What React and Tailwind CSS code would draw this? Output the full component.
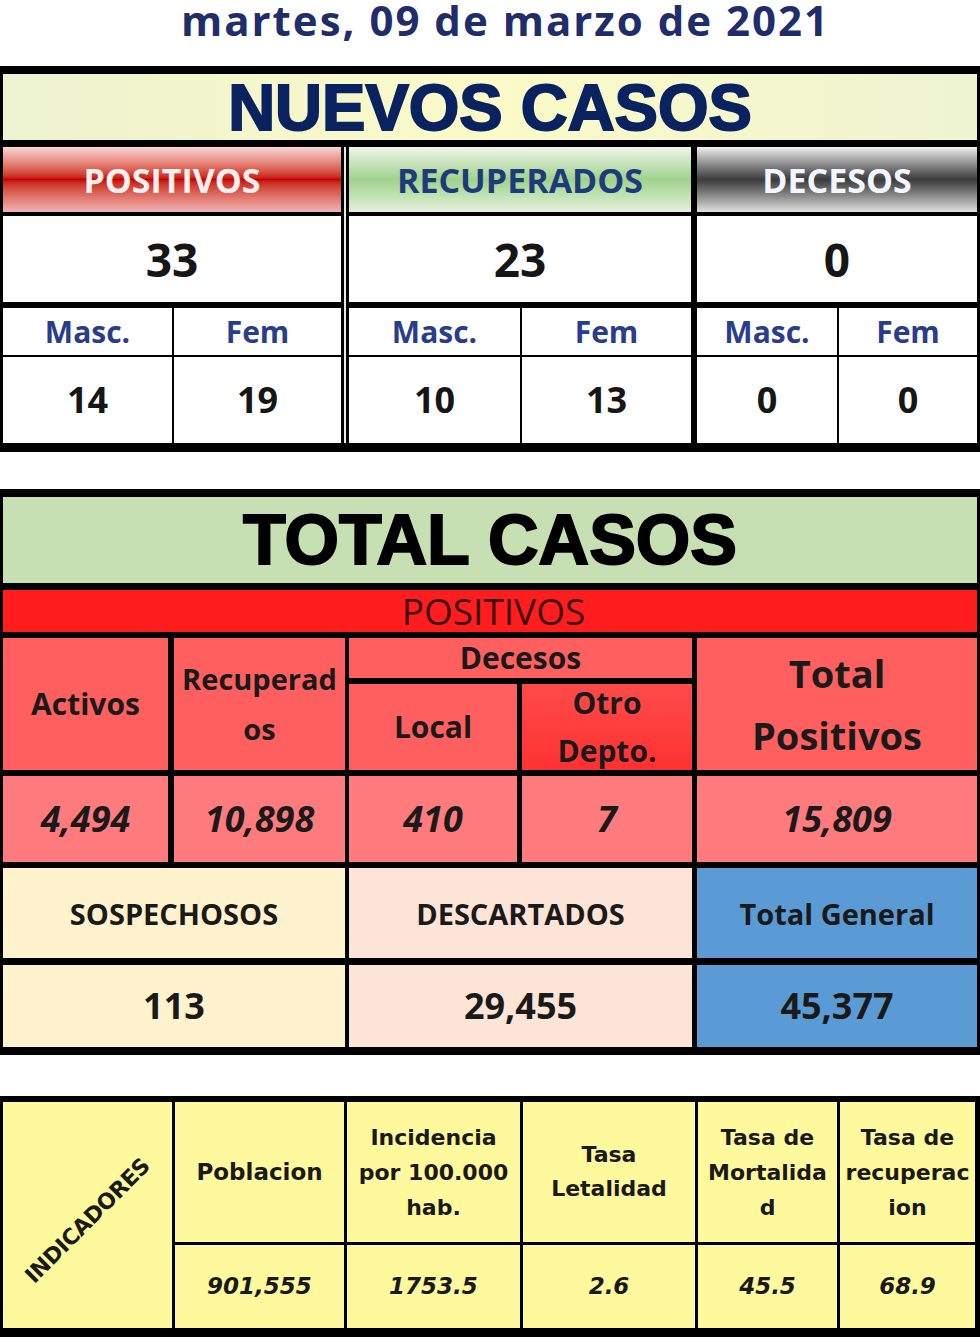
export default function App() {
  const ind = "bg-[#fdf99c] flex items-center justify-center text-center text-[#1a1a1a] font-bold";
  return (
    <div className="w-[980px] h-[1337px] bg-white font-['Open_Sans',sans-serif] overflow-hidden">
      {/* Date title */}
      <div className="h-[66px] flex items-start justify-center pl-[31px]">
        <h1 className="mt-[-3px] text-[42px] font-bold leading-[1.1] tracking-[2px] text-[#1f2d6b]">
          martes, 09 de marzo de 2021
        </h1>
      </div>

      {/* NUEVOS CASOS */}
      <div className="bg-black pt-[8px] pb-[9px] px-[3px] flex flex-col">
        <div className="h-[66px] bg-gradient-to-r from-[#edf2d0] via-[#fbfbc8] to-[#eef3d2] flex items-center justify-center">
          <span className="font-['Liberation_Sans',sans-serif] font-bold text-[65px] leading-none text-[#0b2260] [-webkit-text-stroke:2px_#0b2260]">
            NUEVOS CASOS
          </span>
        </div>
        <div className="mt-[7px] flex">
          {/* Positivos */}
          <div className="w-[338px] flex flex-col">
            <div className="h-[65px] bg-gradient-to-b from-[#f6d6d6] via-[#c60000] to-[#efb3b3] flex items-center justify-center">
              <span className="text-[34px] font-bold leading-none text-[#fff0f0]">POSITIVOS</span>
            </div>
            <div className="mt-[4px] h-[86px] bg-white flex items-center justify-center text-[46px] font-bold leading-none text-[#161616]">33</div>
            <div className="mt-[6px] h-[47px] flex">
              <div className="w-[169px] bg-white flex items-center justify-center text-[30px] font-bold leading-none text-[#2a3d8c]">Masc.</div>
              <div className="ml-[2px] flex-1 bg-white flex items-center justify-center text-[30px] font-bold leading-none text-[#2a3d8c]">Fem</div>
            </div>
            <div className="mt-[2px] h-[86px] flex">
              <div className="w-[169px] bg-white flex items-center justify-center text-[36px] font-bold leading-none text-[#161616]">14</div>
              <div className="ml-[2px] flex-1 bg-white flex items-center justify-center text-[36px] font-bold leading-none text-[#161616]">19</div>
            </div>
          </div>
          {/* double separator */}
          <div className="w-[8px] flex justify-center">
            <div className="w-[2px] bg-[#e8e8e8]" />
          </div>
          {/* Recuperados */}
          <div className="w-[342px] flex flex-col">
            <div className="h-[65px] bg-gradient-to-b from-[#eef6ea] via-[#9fd28c] to-[#e4f1dc] flex items-center justify-center">
              <span className="text-[34px] font-bold leading-none text-[#1f3a7a]">RECUPERADOS</span>
            </div>
            <div className="mt-[4px] h-[86px] bg-white flex items-center justify-center text-[46px] font-bold leading-none text-[#161616]">23</div>
            <div className="mt-[6px] h-[47px] flex">
              <div className="w-[171px] bg-white flex items-center justify-center text-[30px] font-bold leading-none text-[#2a3d8c]">Masc.</div>
              <div className="ml-[2px] flex-1 bg-white flex items-center justify-center text-[30px] font-bold leading-none text-[#2a3d8c]">Fem</div>
            </div>
            <div className="mt-[2px] h-[86px] flex">
              <div className="w-[171px] bg-white flex items-center justify-center text-[36px] font-bold leading-none text-[#161616]">10</div>
              <div className="ml-[2px] flex-1 bg-white flex items-center justify-center text-[36px] font-bold leading-none text-[#161616]">13</div>
            </div>
          </div>
          <div className="w-[6px]" />
          {/* Decesos */}
          <div className="flex-1 flex flex-col">
            <div className="h-[65px] bg-gradient-to-b from-[#f2f2f2] via-[#3c3c3c] to-[#e2e2e2] flex items-center justify-center">
              <span className="text-[34px] font-bold leading-none text-[#f4f6ff]">DECESOS</span>
            </div>
            <div className="mt-[4px] h-[86px] bg-white flex items-center justify-center text-[46px] font-bold leading-none text-[#161616]">0</div>
            <div className="mt-[6px] h-[47px] flex">
              <div className="w-[140px] bg-white flex items-center justify-center text-[30px] font-bold leading-none text-[#2a3d8c]">Masc.</div>
              <div className="ml-[2px] flex-1 bg-white flex items-center justify-center text-[30px] font-bold leading-none text-[#2a3d8c]">Fem</div>
            </div>
            <div className="mt-[2px] h-[86px] flex">
              <div className="w-[140px] bg-white flex items-center justify-center text-[36px] font-bold leading-none text-[#161616]">0</div>
              <div className="ml-[2px] flex-1 bg-white flex items-center justify-center text-[36px] font-bold leading-none text-[#161616]">0</div>
            </div>
          </div>
        </div>
      </div>

      {/* TOTAL CASOS */}
      <div className="mt-[37px] bg-black pt-[8px] pb-[8px] px-[3px] flex flex-col text-[#1a1a1a]">
        <div className="h-[86px] bg-[#c6e0b4] flex items-center justify-center">
          <span className="font-['Liberation_Sans',sans-serif] font-bold text-[70px] leading-none text-black [-webkit-text-stroke:2px_#000]">TOTAL CASOS</span>
        </div>
        <div className="mt-[7px] h-[42px] bg-[#ff1d1d] flex items-center justify-center">
          <span className="pl-[7px] text-[37px] leading-[42px] text-[#3b0b0b]">POSITIVOS</span>
        </div>
        <div className="mt-[6px] h-[132px] flex font-bold">
          <div className="w-[165px] bg-[#ff5f5f] flex items-center justify-center text-[30px] leading-none">Activos</div>
          <div className="ml-[6px] w-[171px] bg-[#ff5f5f] flex items-center justify-center text-center text-[29px] leading-[50px]">
            Recuperad<br />os
          </div>
          <div className="ml-[4px] w-[343px] flex flex-col">
            <div className="h-[40px] bg-[#ff5f5f] flex items-center justify-center text-[30px] leading-none">Decesos</div>
            <div className="mt-[6px] h-[86px] flex">
              <div className="w-[168px] bg-[#ff5f5f] flex items-center justify-center text-[30px] leading-none">Local</div>
              <div className="ml-[5px] flex-1 bg-gradient-to-b from-[#ff4a4a] to-[#ff3030] flex items-center justify-center text-center text-[30px] leading-[48px] overflow-hidden">
                <span>Otro<br />Depto.</span>
              </div>
            </div>
          </div>
          <div className="ml-[5px] flex-1 bg-[#ff5f5f] flex items-center justify-center text-center text-[38px] leading-[62px]">
            Total<br />Positivos
          </div>
        </div>
        <div className="mt-[6px] h-[86px] flex font-bold italic text-[36px] leading-none">
          <div className="w-[165px] bg-[#ff7b7e] flex items-center justify-center">4,494</div>
          <div className="ml-[6px] w-[171px] bg-[#ff7b7e] flex items-center justify-center">10,898</div>
          <div className="ml-[4px] w-[168px] bg-[#ff7b7e] flex items-center justify-center">410</div>
          <div className="ml-[5px] w-[170px] bg-[#ff7b7e] flex items-center justify-center">7</div>
          <div className="ml-[5px] flex-1 bg-[#ff7b7e] flex items-center justify-center">15,809</div>
        </div>
        <div className="mt-[6px] h-[90px] flex font-bold text-[29px] leading-none">
          <div className="w-[342px] bg-[#fff2cc] flex items-center justify-center">SOSPECHOSOS</div>
          <div className="ml-[4px] w-[343px] bg-[#fce4d6] flex items-center justify-center">DESCARTADOS</div>
          <div className="ml-[5px] flex-1 bg-[#5b9bd5] flex items-center justify-center">Total General</div>
        </div>
        <div className="mt-[7px] h-[82px] flex font-bold text-[36px] leading-none">
          <div className="w-[342px] bg-[#fff2cc] flex items-center justify-center">113</div>
          <div className="ml-[4px] w-[343px] bg-[#fce4d6] flex items-center justify-center">29,455</div>
          <div className="ml-[5px] flex-1 bg-[#5b9bd5] flex items-center justify-center">45,377</div>
        </div>
      </div>

      {/* INDICADORES */}
      <div className="mt-[41px] bg-black pt-[6px] pb-[9px] pl-[3px] pr-[5px] grid grid-cols-[169px_169px_173px_172px_139px_135px] grid-rows-[140px_83px] gap-[3px] font-['DejaVu_Sans',sans-serif]">
        <div className={`${ind} row-span-2 overflow-hidden`}>
          <span className="-rotate-45 translate-y-[6px] text-[22px] leading-none tracking-[-0.5px]">INDICADORES</span>
        </div>
        <div className={`${ind} text-[23px] leading-none`}>Poblacion</div>
        <div className={`${ind} text-[22px] leading-[35px]`}>Incidencia<br />por 100.000<br />hab.</div>
        <div className={`${ind} text-[22px] leading-[34px]`}>Tasa<br />Letalidad</div>
        <div className={`${ind} text-[22px] leading-[35px]`}>Tasa de<br />Mortalida<br />d</div>
        <div className={`${ind} text-[22px] leading-[35px]`}>Tasa de<br />recuperac<br />ion</div>
        <div className={`${ind} italic text-[23px] leading-none`}>901,555</div>
        <div className={`${ind} italic text-[23px] leading-none`}>1753.5</div>
        <div className={`${ind} italic text-[23px] leading-none`}>2.6</div>
        <div className={`${ind} italic text-[23px] leading-none`}>45.5</div>
        <div className={`${ind} italic text-[23px] leading-none`}>68.9</div>
      </div>
    </div>
  );
}
